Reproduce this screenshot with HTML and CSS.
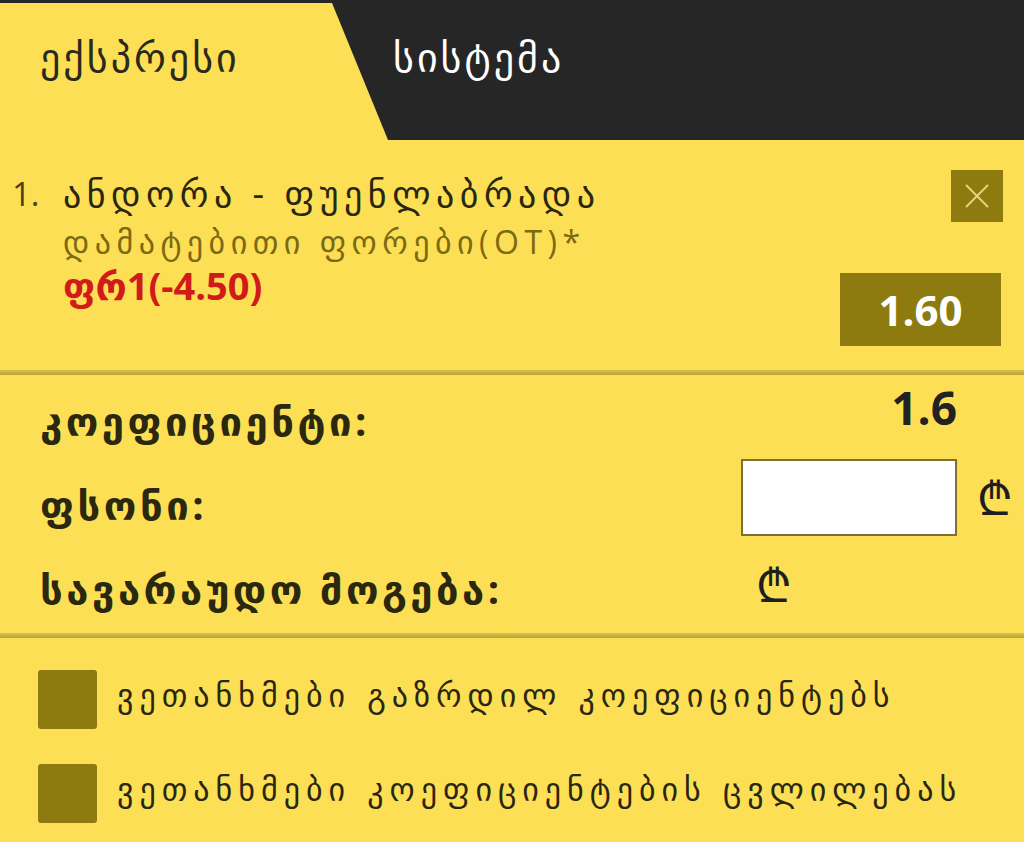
FILE: index.html
```html
<!DOCTYPE html>
<html>
<head>
  <title>ბილეთი</title>
  <link rel="stylesheet" href="styles.css">
</head>
<body>

  <div class="tabs">
    <div class="tab tab-active">ექსპრესი</div>
    <div class="tab">სისტემა</div>
  </div>

  <div class="bet">
    <div class="bet-num">1.</div>
    <div class="bet-info">
      <div class="bet-match">ანდორა - ფუენლაბრადა</div>
      <div class="bet-market">დამატებითი ფორები(OT)*</div>
      <div class="bet-pick">ფრ1(-4.50)</div>
    </div>
    <div class="bet-side">
      <button class="bet-remove">
        <svg width="26" height="26" viewBox="0 0 26 26">
          <path d="M2 2 L24 24 M24 2 L2 24" stroke="#e9d27a" stroke-width="2"/>
        </svg>
      </button>
      <div class="bet-odd">1.60</div>
    </div>
  </div>

  <div class="divider"></div>

  <div class="summary">
    <div class="label">კოეფიციენტი:</div>
    <div class="total-odd">1.6</div>
    <div></div>

    <div class="label">ფსონი:</div>
    <input type="text" class="stake">
    <div class="lari">₾</div>

    <div class="label">სავარაუდო მოგება:</div>
    <div class="win"><span class="lari">₾</span></div>
    <div></div>
  </div>

  <div class="divider"></div>

  <div class="options">
    <label class="option"><span class="check"></span><span class="option-text">ვეთანხმები გაზრდილ კოეფიციენტებს</span></label>
    <label class="option"><span class="check"></span><span class="option-text">ვეთანხმები კოეფიციენტების ცვლილებას</span></label>
  </div>

</body>
</html>
```

FILE: styles.css
```css
body {
  margin: 0;
  background: #fddf55;
  font-family: "Open Sans", "DejaVu Sans", sans-serif;
  color: #2a2710;
}
.tabs {
  display: flex;
  height: 137px;
  padding-top: 3px;
  background: #262626;
}
.tab {
  font-family: "DejaVu Sans", sans-serif;
  font-size: 40px;
  letter-spacing: 3px;
  padding-top: 32px;
  color: #ffffff;
}
.tab-active {
  width: 350px;
  padding-left: 40px;
  color: #2a2a1a;
  background: #fddf55;
  clip-path: polygon(0 0, 332px 0, 388px 100%, 0 100%);
}
.tab + .tab {
  padding-left: 3px;
}
.bet {
  display: flex;
  padding: 30px 21px 24px 12px;
}
.bet-num {
  width: 51px;
  margin-top: 2px;
  font-size: 33px;
  line-height: 44px;
  color: #4a4212;
}
.bet-info {
  flex: 1;
  margin-top: 2px;
}
.bet-match {
  font-size: 36px;
  line-height: 44px;
  letter-spacing: 5.5px;
  color: #2a2710;
}
.bet-market {
  font-size: 32px;
  line-height: 52px;
  letter-spacing: 5.5px;
  color: #7a6a12;
}
.bet-pick {
  font-size: 38px;
  font-weight: bold;
  line-height: 34px;
  color: #d11a1a;
}
.bet-side {
  height: 176px;
  display: flex;
  flex-direction: column;
  align-items: flex-end;
  justify-content: space-between;
}
.bet-remove {
  width: 52px;
  height: 52px;
  border: none;
  padding: 0;
  background: #8d7b0f;
  display: flex;
  align-items: center;
  justify-content: center;
}
.bet-odd {
  width: 161px;
  height: 73px;
  margin-right: 2px;
  background: #8d7b0f;
  color: #ffffff;
  font-size: 42px;
  font-weight: bold;
  line-height: 73px;
  text-align: center;
}
.divider {
  height: 5px;
  background: linear-gradient(#dcc14b, #bba036);
}
.summary {
  display: grid;
  grid-template-columns: 1fr 216px 67px;
  grid-template-rows: 84px 84px 84px;
  align-items: center;
  padding: 0 0 6px 40px;
}
.label {
  padding-top: 6px;
  font-size: 40px;
  font-weight: bold;
  letter-spacing: 3.5px;
  color: #2b2810;
}
.total-odd {
  align-self: start;
  margin-top: 9px;
  font-size: 46px;
  line-height: 46px;
  font-weight: bold;
  text-align: right;
  color: #222222;
}
.stake {
  align-self: start;
  box-sizing: border-box;
  width: 216px;
  height: 77px;
  border: 2px solid #7d7132;
  background: #ffffff;
}
.lari {
  align-self: start;
  margin-top: 7px;
  padding-left: 20px;
  font-family: "DejaVu Sans", sans-serif;
  font-size: 46px;
  font-weight: 200;
  color: #1e1e1e;
}
.win {
  align-self: start;
}
.win .lari {
  display: block;
  margin-top: 10px;
  padding-left: 15px;
}
.options {
  padding: 32px 0 0 38px;
}
.option {
  display: flex;
  align-items: center;
  gap: 20px;
  height: 59px;
  margin-bottom: 35px;
  font-family: "DejaVu Sans", sans-serif;
  font-size: 32px;
  letter-spacing: 6px;
  color: #2a2710;
}
.option-text {
  padding-bottom: 8px;
}
.check {
  width: 59px;
  height: 59px;
  border-radius: 3px;
  background: #8d7b0f;
}
```
